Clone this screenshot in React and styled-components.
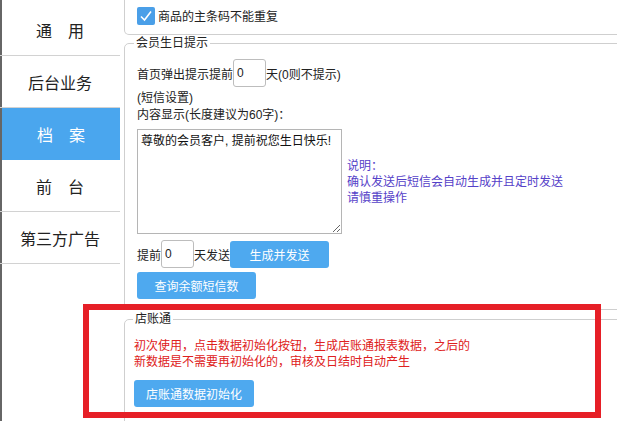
import React from 'react';
import styled, { createGlobalStyle } from 'styled-components';

const Global = createGlobalStyle`
html, body {
  margin: 0;
  padding: 0;
  background: #fff;
  overflow: hidden;
}
body {
  font-family: "Liberation Sans", "Noto Sans CJK SC", sans-serif;
  font-size: 12px;
  color: #222;
}
#root {
  width: 617px;
  height: 421px;
  overflow: hidden;
}
`

const Page = styled.div`
position: relative;
display: flex;
flex-direction: row;
width: 660px;
height: 421px;
`

const Sidebar = styled.div`
flex: none;
width: 120px;
height: 100%;
box-sizing: border-box;
border-left: 2px solid #666;
padding-top: 4px;
`

const NavItem = styled.div`
height: 52px;
box-sizing: border-box;
display: flex;
align-items: center;
justify-content: center;
font-size: 16px;
color: ${p => p.$active ? '#fff' : '#222'};
background: ${p => p.$active ? '#4aa6ee' : 'transparent'};
border-bottom: 1px solid ${p => p.$active ? '#4aa6ee' : '#d2d2d2'};
margin-left: ${p => p.$active ? '0' : '-2px'};
`

const Main = styled.div`
flex: 1;
margin-left: 4px;
display: flex;
flex-direction: column;
`

const Box = styled.fieldset`
margin: 0;
min-width: 0;
border: 1px solid #cfcfcf;
border-radius: 5px;
padding: 8px 12px 10px 12px;
`

const TopBox = styled(Box)`
border-top: none;
border-radius: 0 0 5px 5px;
padding: 6px 12px 9px 12px;
`

const Legend = styled.legend`
padding: 0 2px;
margin-left: ${p => p.$shift}px;
line-height: 16px;
font-size: 12px;
color: #222;
`

const Row = styled.div`
display: flex;
align-items: center;
height: ${p => p.$h || 28}px;
margin-top: ${p => p.$mt || 0}px;
`

const Check = styled.span`
width: 18px;
height: 18px;
border-radius: 2px;
background: #4a9fe8;
display: flex;
align-items: center;
justify-content: center;
margin-right: 3px;
`

const Input = styled.input`
box-sizing: border-box;
width: 33px;
height: 28px;
border: 1px solid #bdbdbd;
border-radius: 3px;
padding: 0 3px;
font-family: "Liberation Sans", sans-serif;
font-size: 12px;
color: #222;
outline: none;
`

const Line = styled.div`
line-height: 17px;
margin-top: ${p => p.$mt || 0}px;
`

const Compose = styled.div`
display: flex;
align-items: center;
margin-top: 5px;
`

const Area = styled.textarea`
box-sizing: border-box;
width: 205px;
height: 105px;
border: 1px solid #b5b5b5;
padding: 3px 3px;
font-family: "Liberation Sans", "Noto Sans CJK SC", sans-serif;
font-size: 12px;
line-height: 16px;
color: #111;
resize: both;
outline: none;
`

const Note = styled.div`
margin-left: 5px;
color: #5541c8;
line-height: 16px;
`

const Button = styled.button`
box-sizing: border-box;
width: ${p => p.$w}px;
height: 27px;
margin-top: ${p => p.$mt || 0}px;
border: none;
border-radius: 3px;
background: #4ea9ef;
color: #fff;
font-family: "Liberation Sans", "Noto Sans CJK SC", sans-serif;
font-size: 12px;
padding: 0;
`

const Warn = styled.div`
color: #de2020;
line-height: 16px;
`

const ShopBox = styled(Box)`
margin-top: 1px;
padding: 11px 12px 30px 9px;
`

const Marker = styled.div`
position: absolute;
left: 83px;
top: 304px;
width: 518px;
height: 114px;
box-sizing: border-box;
border: 6px solid #e61f27;
pointer-events: none;
`

const navs = ['通　用', '后台业务', '档　案', '前　台', '第三方广告'];

const App = () => {
  return (
    <Page>
      <Global />
      <Sidebar>
        {navs.map(n => (
          <NavItem key={n} $active={n === '档　案'}>{n}</NavItem>
        ))}
      </Sidebar>
      <Main>
        <TopBox>
          <Row $h={19}>
            <Check>
              <svg width="14" height="14" viewBox="0 0 14 14">
                <path d="M2 7.5 L5.5 11 L12 2.5" fill="none" stroke="#fff" strokeWidth="1.6" />
              </svg>
            </Check>
            商品的主条码不能重复
          </Row>
        </TopBox>
        <Box>
          <Legend $shift={-3}>会员生日提示</Legend>
          <Row>
            首页弹出提示提前<Input readOnly value="0" />天(0则不提示)
          </Row>
          <Line $mt={3}>(短信设置)</Line>
          <Line>内容显示(长度建议为60字)：</Line>
          <Compose>
            <Area readOnly defaultValue="尊敬的会员客户, 提前祝您生日快乐!" />
            <Note>
              说明：<br />
              确认发送后短信会自动生成并且定时发送<br />
              请慎重操作
            </Note>
          </Compose>
          <Row $mt={6}>
            提前<Input readOnly value="0" />天发送
            <Button $w={99}>生成并发送</Button>
          </Row>
          <Button $w={119} $mt={4}>查询余额短信数</Button>
        </Box>
        <ShopBox>
          <Legend $shift={-1}>店账通</Legend>
          <Warn>
            初次使用，点击数据初始化按钮，生成店账通报表数据，之后的<br />
            新数据是不需要再初始化的，审核及日结时自动产生
          </Warn>
          <Button $w={120} $mt={10}>店账通数据初始化</Button>
        </ShopBox>
      </Main>
      <Marker />
    </Page>
  );
}

export default App;
